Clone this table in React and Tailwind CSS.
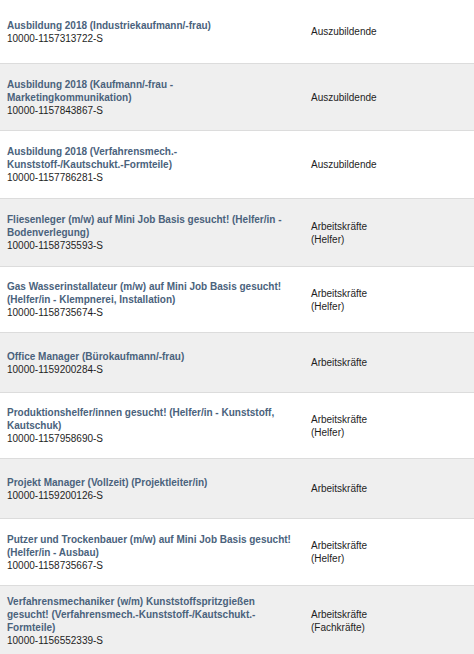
import React from "react";

const rows = [
  { h: "h-[64px]", bg: "bg-white", title: ["Ausbildung 2018 (Industriekaufmann/-frau)"], id: "10000-1157313722-S", type: ["Auszubildende"] },
  { h: "h-[67px]", bg: "bg-[#efefef]", title: ["Ausbildung 2018 (Kaufmann/-frau -", "Marketingkommunikation)"], id: "10000-1157843867-S", type: ["Auszubildende"] },
  { h: "h-[68px]", bg: "bg-white", title: ["Ausbildung 2018 (Verfahrensmech.-", "Kunststoff-/Kautschukt.-Formteile)"], id: "10000-1157786281-S", type: ["Auszubildende"] },
  { h: "h-[68px]", bg: "bg-[#efefef]", title: ["Fliesenleger (m/w) auf Mini Job Basis gesucht! (Helfer/in -", "Bodenverlegung)"], id: "10000-1158735593-S", type: ["Arbeitskräfte", "(Helfer)"] },
  { h: "h-[66px]", bg: "bg-white", title: ["Gas Wasserinstallateur (m/w) auf Mini Job Basis gesucht!", "(Helfer/in - Klempnerei, Installation)"], id: "10000-1158735674-S", type: ["Arbeitskräfte", "(Helfer)"] },
  { h: "h-[60px]", bg: "bg-[#efefef]", title: ["Office Manager (Bürokaufmann/-frau)"], id: "10000-1159200284-S", type: ["Arbeitskräfte"] },
  { h: "h-[66px]", bg: "bg-white", title: ["Produktionshelfer/innen gesucht! (Helfer/in - Kunststoff,", "Kautschuk)"], id: "10000-1157958690-S", type: ["Arbeitskräfte", "(Helfer)"] },
  { h: "h-[60px]", bg: "bg-[#efefef]", title: ["Projekt Manager (Vollzeit) (Projektleiter/in)"], id: "10000-1159200126-S", type: ["Arbeitskräfte"] },
  { h: "h-[67px]", bg: "bg-white", title: ["Putzer und Trockenbauer (m/w) auf Mini Job Basis gesucht!", "(Helfer/in - Ausbau)"], id: "10000-1158735667-S", type: ["Arbeitskräfte", "(Helfer)"] },
  { h: "h-[70px]", bg: "bg-[#efefef]", title: ["Verfahrensmechaniker (w/m) Kunststoffspritzgießen", "gesucht! (Verfahrensmech.-Kunststoff-/Kautschukt.-", "Formteile)"], id: "10000-1156552339-S", type: ["Arbeitskräfte", "(Fachkräfte)"] },
];

export default function App() {
  return (
    <div
      className="w-[474px] h-[654px] overflow-hidden bg-white text-[10px] leading-[13px] text-[#1e1e1e]"
      style={{ fontFamily: '"Liberation Sans", Arial, sans-serif' }}
    >
      {rows.map((r, i) => (
        <div key={i} className={`flex items-center ${r.h} ${r.bg} border-b border-[#dcdcdc]`}>
          <div className="w-[311px] pl-[7px] pr-2 flex flex-col">
            {r.title.map((t, j) => (
              <span key={j} className="whitespace-nowrap font-bold text-[#4a627c]">{t}</span>
            ))}
            <span className="whitespace-nowrap">{r.id}</span>
          </div>
          <div className="flex flex-col">
            {r.type.map((t, j) => (
              <span key={j} className="whitespace-nowrap">{t}</span>
            ))}
          </div>
        </div>
      ))}
    </div>
  );
}
